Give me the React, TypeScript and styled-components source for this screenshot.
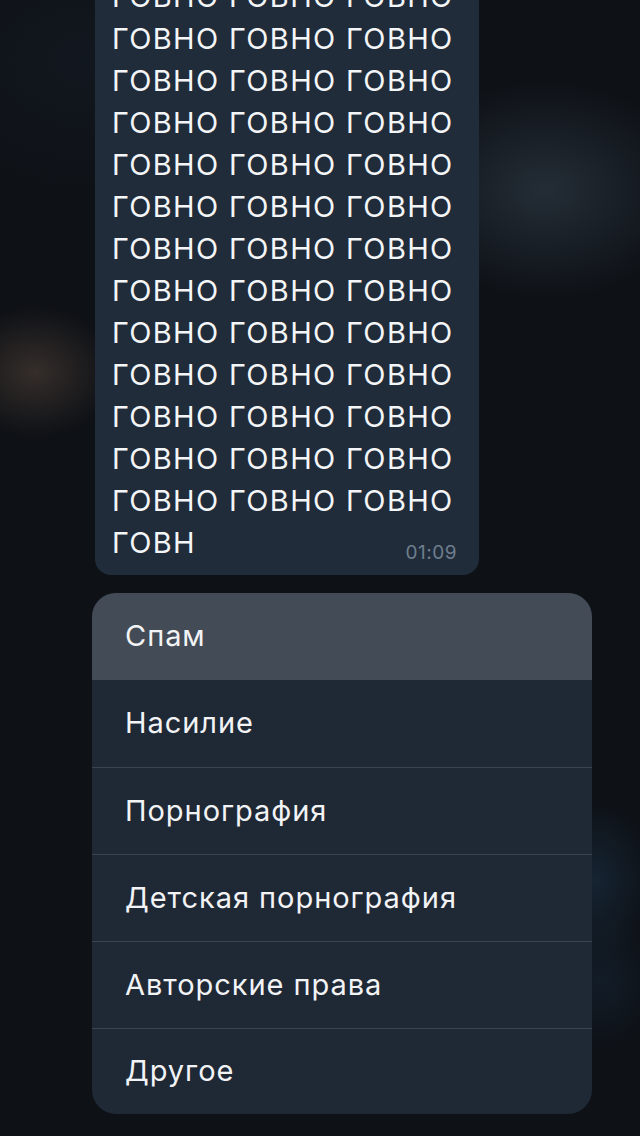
import React from "react";
import styled, { createGlobalStyle } from "styled-components";

const GlobalStyle = createGlobalStyle`
  html, body {
    margin: 0;
    padding: 0;
    background: #0e1116;
  }
  body {
    font-family: Inter, "Noto Sans", "Liberation Sans", sans-serif;
    -webkit-font-smoothing: antialiased;
  }
`;

const reasons = [
  "Спам",
  "Насилие",
  "Порнография",
  "Детская порнография",
  "Авторские права",
  "Другое",
];

const words = Array(39).fill("ГОВНО").join(" ") + " ГОВН";

function App() {
  return (
    <>
      <GlobalStyle />
      <Screen>
        <Column>
          <Bubble>
            <MessageText>{words}</MessageText>
            <Time>01:09</Time>
          </Bubble>
          <Menu>
            {reasons.map((r, i) => (
              <MenuItem key={r} $active={i === 0}>
                {r}
              </MenuItem>
            ))}
          </Menu>
        </Column>
      </Screen>
    </>
  );
}

export default App;

const Screen = styled.div`
  width: 640px;
  height: 1136px;
  overflow: hidden;
  background:
    radial-gradient(ellipse 80px 65px at 35px 372px, rgba(70, 58, 50, 0.7), transparent),
    radial-gradient(ellipse 150px 110px at 545px 190px, rgba(38, 48, 58, 0.9), transparent),
    radial-gradient(ellipse 60px 80px at 595px 880px, rgba(24, 44, 62, 0.7), transparent),
    radial-gradient(ellipse 60px 70px at 600px 980px, rgba(22, 40, 58, 0.5), transparent),
    radial-gradient(ellipse 200px 140px at 90px 60px, rgba(22, 30, 40, 0.5), transparent),
    #0e1116;
`;

const Column = styled.div`
  display: flex;
  flex-direction: column;
  align-items: flex-start;
  padding: 0 48px 0 92px;
`;

const Bubble = styled.div`
  position: relative;
  box-sizing: border-box;
  width: 384px;
  margin: -30px 0 0 3px;
  padding: 6px 20px 11px 17px;
  background: #202c3a;
  border-radius: 16px;
`;

const MessageText = styled.div`
  color: #f4f5f7;
  font-size: 29px;
  line-height: 42px;
  letter-spacing: 1.35px;
`;

const Time = styled.span`
  position: absolute;
  right: 22px;
  bottom: 12px;
  color: #6e7e8e;
  font-size: 19px;
  line-height: 20px;
  letter-spacing: 0.5px;
`;

const Menu = styled.div`
  margin-top: 18px;
  width: 500px;
  border-radius: 24px;
  overflow: hidden;
  background: #1f2835;
  display: flex;
  flex-direction: column;
`;

const MenuItem = styled.div<{ $active?: boolean }>`
  height: 87px;
  box-sizing: border-box;
  display: flex;
  align-items: center;
  padding: 0 0 2px 33px;
  color: #f2f3f5;
  font-size: 29px;
  letter-spacing: 0.95px;
  background: ${(p) => (p.$active ? "#434c56" : "transparent")};
  border-top: ${(p) => (p.$active ? "none" : "1px solid #394450")};
  &:nth-child(2) {
    border-top: none;
  }
  &:last-child {
    height: 86px;
  }
`;
